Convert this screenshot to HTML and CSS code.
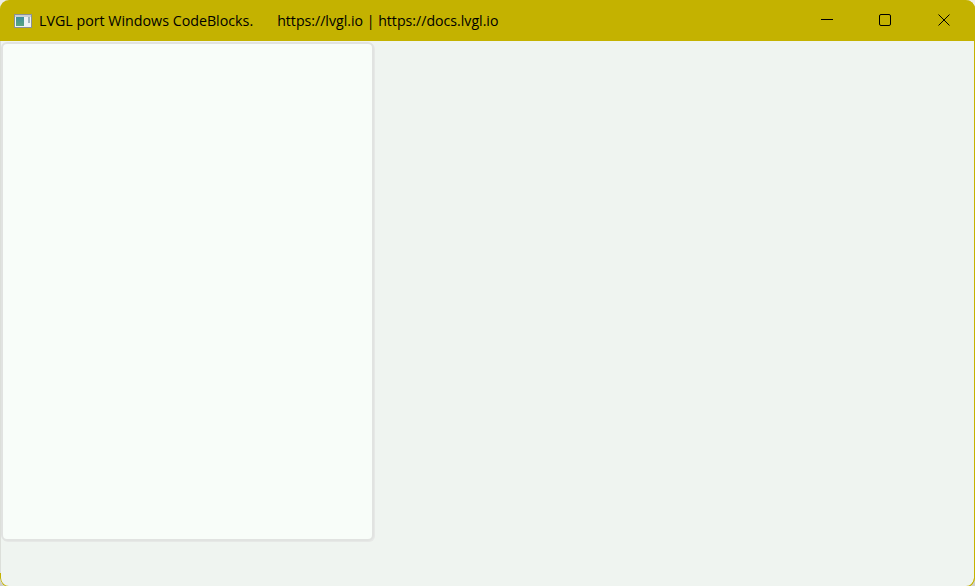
FILE: index.html
```html
<!DOCTYPE html>
<html lang="en">
<head>
<meta charset="utf-8">
<title>LVGL port Windows CodeBlocks.</title>
<link rel="stylesheet" href="styles.css">
</head>
<body>
<div class="window">
  <header class="titlebar">
    <svg class="app-icon" width="18" height="14" viewBox="0 0 18 14">
      <rect x="0.5" y="0.5" width="17" height="13" fill="#eef2f4" stroke="#8a9196"/>
      <rect x="1" y="1" width="16" height="2" fill="#c9ced2"/>
      <defs><linearGradient id="g" x1="0" y1="0" x2="0" y2="1"><stop offset="0" stop-color="#3f8f9c"/><stop offset="1" stop-color="#5aa57e"/></linearGradient></defs>
      <rect x="2" y="3" width="8" height="9" fill="url(#g)"/>
      <rect x="14" y="3" width="2" height="6" fill="#9fb4bc"/>
    </svg>
    <span class="title">LVGL port Windows CodeBlocks.</span>
    <span class="title-url">https://lvgl.io | https://docs.lvgl.io</span>
    <div class="controls">
      <button class="ctrl"><svg width="12" height="12" viewBox="0 0 12 12"><path d="M0 5.5H12" stroke="#000" fill="none"/></svg></button>
      <button class="ctrl"><svg width="12" height="12" viewBox="0 0 12 12"><rect x="0.5" y="0.5" width="11" height="11" rx="1.5" stroke="#000" fill="none"/></svg></button>
      <button class="ctrl ctrl-close"><svg width="12" height="12" viewBox="0 0 12 12"><path d="M0.5 0.5L11.5 11.5M11.5 0.5L0.5 11.5" stroke="#000" fill="none"/></svg></button>
    </div>
  </header>
  <main class="content">
    <section class="panel"></section>
  </main>
</div>
</body>
</html>
```
FILE: styles.css
```css
* { box-sizing: border-box; }
html, body { margin: 0; height: 100%; overflow: hidden; }
body { background: linear-gradient(#eeeee8, #cfcfcb); }
.window {
  position: relative;
  width: 975px;
  height: 587px;
  display: flex;
  flex-direction: column;
  background: #eff4f0;
  border-radius: 9px;
  box-shadow: inset -1px 0 #c4b200, inset 1px 0 #dcdfda;
  overflow: hidden;
  font-family: "Open Sans", sans-serif;
}
.window::after {
  content: "";
  position: absolute;
  left: 0;
  bottom: 0;
  width: 11px;
  height: 13px;
  border-left: 1px solid #c4b200;
  border-bottom: 1px solid #c4b200;
  border-bottom-left-radius: 9px;
}
.window::before {
  content: "";
  position: absolute;
  right: 0;
  bottom: 0;
  width: 11px;
  height: 13px;
  border-right: 1px solid #c4b200;
  border-bottom: 1px solid #c4b200;
  border-bottom-right-radius: 9px;
}
.titlebar {
  height: 41px;
  flex: none;
  background: #c4b200;
  display: flex;
  align-items: center;
  padding-left: 14px;
  padding-right: 2px;
  color: #000;
  font-size: 14.25px;
}
.app-icon { flex: none; margin-right: 7px; }
.title { margin-right: 24px; }
.title-url { font-size: 14.15px; }
.controls { margin-left: auto; display: flex; align-self: flex-start; }
.ctrl {
  width: 58px;
  height: 40px;
  padding: 0;
  border: 0;
  background: none;
  display: flex;
  align-items: center;
  justify-content: center;
}
.ctrl-close { margin-left: 1px; }
.content { flex: 1; padding: 1px 0 0 1px; }
.panel {
  width: 373px;
  height: 499px;
  background: #f8fdf9;
  border: 2px solid #e1e3e1;
  border-radius: 6px;
  box-shadow: 1px 1px 0 #e6e8e6;
}
```
